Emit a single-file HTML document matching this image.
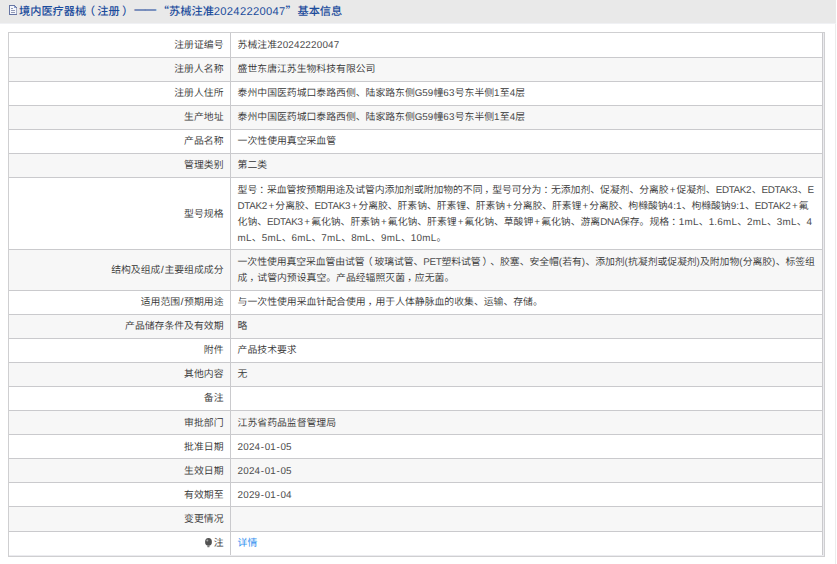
<!DOCTYPE html>
<html lang="zh-CN">
<head>
<meta charset="utf-8">
<title>境内医疗器械（注册）基本信息</title>
<style>
html,body{margin:0;padding:0;background:#fff;overflow:hidden;}
#page{position:absolute;left:0;top:0;width:837px;height:564px;background:#fff;overflow:hidden;font-family:"Liberation Sans","Noto Sans CJK SC",sans-serif;font-size:9.85px;color:#333;font-weight:350;text-spacing-trim:space-all;text-rendering:geometricPrecision;}
.hd{position:absolute;left:0;top:0;width:836px;height:23px;background:#e9e9e9;}
.hd2{position:absolute;left:0;top:23px;width:836px;height:1px;background:#f0f1f4;}
.vline{position:absolute;left:835px;top:24px;width:1px;height:540px;background:#ececec;}
.ico{position:absolute;left:9px;top:5px;width:8px;height:10px;}
.tt{position:absolute;left:19px;top:1.5px;height:20px;line-height:20px;font-size:11.2px;font-weight:500;color:#1b4c9c;white-space:nowrap;}
.tb{position:absolute;left:8px;top:32px;width:815px;height:523px;border:1px solid #cfcfd1;background:#ebebef;}
.r{position:absolute;left:0;width:813px;border-right:1px solid #cacacd;border-bottom:1px solid #cacacd;background:#fff;}
.r.alt{background:#f7f7f7;}
.r.last{border-bottom:none;}
.l{position:absolute;left:0;top:0;bottom:0;width:222px;border-right:1px solid #cacacd;}
.l{display:flex;align-items:center;justify-content:flex-end;white-space:nowrap;line-height:16px;box-sizing:border-box;padding-right:6.5px;}
.v{position:absolute;left:228.6px;height:16px;line-height:16px;white-space:nowrap;}
a{color:#3390f0;font-weight:400;}
.bulb{width:7px;height:10px;margin-right:1.6px;vertical-align:-1.6px;}
.li{display:block;line-height:16px;height:16px;}
.pc{position:relative;left:.22em;}
.po{font-feature-settings:"halt";padding-left:.3em;padding-right:.2em;}
.pe{font-feature-settings:"halt";padding-left:.2em;padding-right:.3em;}
.q{font-family:"Noto Sans CJK SC",sans-serif;line-height:0;}
.d{letter-spacing:.2px;}
.h{padding:0 .45px;}
.c{letter-spacing:-.33px;}
.m{letter-spacing:.29px;}
.p{padding:0 1.1px;}
.c,.d,.m,.p{color:#4c4c4c;}
.sl{padding:0 .65px;}
.tt .d{letter-spacing:.29px;color:inherit;}
.ds{font-weight:700;margin-left:3.4px;margin-right:1.2px;letter-spacing:-.4px;position:relative;top:-1.3px;}
.ql{margin-left:.8px;}
.qr{margin-right:.8px;}

</style>
</head>
<body>
<div id="page">
<div class="hd"></div><div class="hd2"></div>
<svg class="ico" viewBox="0 0 8 10" width="8" height="10" shape-rendering="crispEdges"><path d="M0.5 0.5H5.5L7.5 2.5V9.5H0.5Z" fill="#f5f7fc" stroke="#6675a3" stroke-width="1"/><path d="M7.5 3V9" stroke="#a3acc8" stroke-width="1"/><path d="M5.5 1V2.5H7" fill="none" stroke="#8fa0cc" stroke-width="1"/><path d="M2 3.5H4M2 5.5H6M2 7.5H6" stroke="#9299b6" stroke-width="1"/></svg>
<div class="tt">境内医疗器械<span class="po">（</span>注册<span class="pe">）</span><span class="ds">——</span><span class="q ql">“</span>苏械注准<span class="d">20242220047</span><span class="q qr">”</span>基本信息</div>
<div class="vline"></div>
<div class="tb">
<div class="r" style="top:0px;height:24px">
<div class="l" style="padding-top:2px"><span class="li">注册证编号</span></div>
<div class="v" style="top:5px">苏械注准<span class="d">20242220047</span></div>
</div>
<div class="r alt" style="top:25px;height:23px">
<div class="l" style="padding-top:1px"><span class="li">注册人名称</span></div>
<div class="v" style="top:4px">盛世东唐江苏生物科技有限公司</div>
</div>
<div class="r" style="top:49px;height:23px">
<div class="l" style="padding-top:1px"><span class="li">注册人住所</span></div>
<div class="v" style="top:4px">泰州中国医药城口泰路西侧、陆家路东侧<span class="c">G</span><span class="d">59</span>幢<span class="d">63</span>号东半侧<span class="d">1</span>至<span class="d">4</span>层</div>
</div>
<div class="r alt" style="top:73px;height:23px">
<div class="l" style="padding-top:1px"><span class="li">生产地址</span></div>
<div class="v" style="top:4px">泰州中国医药城口泰路西侧、陆家路东侧<span class="c">G</span><span class="d">59</span>幢<span class="d">63</span>号东半侧<span class="d">1</span>至<span class="d">4</span>层</div>
</div>
<div class="r" style="top:97px;height:23px">
<div class="l" style="padding-top:1px"><span class="li">产品名称</span></div>
<div class="v" style="top:4px">一次性使用真空采血管</div>
</div>
<div class="r alt" style="top:121px;height:23px">
<div class="l" style="padding-top:1px"><span class="li">管理类别</span></div>
<div class="v" style="top:4px">第二类</div>
</div>
<div class="r" style="top:145px;height:71px">
<div class="l" style="padding-top:3px"><span class="li">型号规格</span></div>
<div class="v" style="top:5px;letter-spacing:-0.05px">型号<span class="pc">：</span>采血管按预期用途及试管内添加剂或附加物的不同<span class="pc">，</span>型号可分为<span class="pc">：</span>无添加剂、促凝剂、分离胶<span class="p">+</span>促凝剂、<span class="c">EDTAK</span><span class="d">2</span>、<span class="c">EDTAK</span><span class="d">3</span>、<span class="c">E</span></div>
<div class="v" style="top:21px;letter-spacing:-0.07px"><span class="c">DTAK</span><span class="d">2</span><span class="p">+</span>分离胶、<span class="c">EDTAK</span><span class="d">3</span><span class="p">+</span>分离胶、肝素钠、肝素锂、肝素钠<span class="p">+</span>分离胶、肝素锂<span class="p">+</span>分离胶、枸橼酸钠<span class="d">4:1</span>、枸橼酸钠<span class="d">9:1</span>、<span class="c">EDTAK</span><span class="d">2</span><span class="p">+</span>氟</div>
<div class="v" style="top:37px;letter-spacing:-0.022px">化钠、<span class="c">EDTAK</span><span class="d">3</span><span class="p">+</span>氟化钠、肝素钠<span class="p">+</span>氟化钠、肝素锂<span class="p">+</span>氟化钠、草酸钾<span class="p">+</span>氟化钠、游离<span class="c">DNA</span>保存。规格<span class="pc">：</span><span class="d">1</span><span class="m">mL</span>、<span class="d">1.6</span><span class="m">mL</span>、<span class="d">2</span><span class="m">mL</span>、<span class="d">3</span><span class="m">mL</span>、<span class="d">4</span></div>
<div class="v" style="top:53px"><span class="m">mL</span>、<span class="d">5</span><span class="m">mL</span>、<span class="d">6</span><span class="m">mL</span>、<span class="d">7</span><span class="m">mL</span>、<span class="d">8</span><span class="m">mL</span>、<span class="d">9</span><span class="m">mL</span>、<span class="d">10</span><span class="m">mL</span>。</div>
</div>
<div class="r alt" style="top:217px;height:40px">
<div class="l" style="padding-top:2px"><span class="li">结构及组成<span class="sl">/</span>主要组成成分</span></div>
<div class="v" style="top:5px;letter-spacing:-0.072px">一次性使用真空采血管由试管<span class="po">（</span>玻璃试管、<span class="c">PET</span>塑料试管<span class="pe">）</span>、胶塞、安全帽<span class="m">(</span>若有<span class="m">)</span>、添加剂<span class="m">(</span>抗凝剂或促凝剂<span class="m">)</span>及附加物<span class="m">(</span>分离胶<span class="m">)</span>、标签组</div>
<div class="v" style="top:21px">成<span class="pc">，</span>试管内预设真空。产品经辐照灭菌<span class="pc">，</span>应无菌。</div>
</div>
<div class="r" style="top:258px;height:23px">
<div class="l" style="padding-top:1px"><span class="li">适用范围<span class="sl">/</span>预期用途</span></div>
<div class="v" style="top:4px">与一次性使用采血针配合使用<span class="pc">，</span>用于人体静脉血的收集、运输、存储。</div>
</div>
<div class="r alt" style="top:282px;height:23px">
<div class="l" style="padding-top:1px"><span class="li">产品储存条件及有效期</span></div>
<div class="v" style="top:4px">略</div>
</div>
<div class="r" style="top:306px;height:23px">
<div class="l" style="padding-top:1px"><span class="li">附件</span></div>
<div class="v" style="top:4px">产品技术要求</div>
</div>
<div class="r alt" style="top:330px;height:23px">
<div class="l" style="padding-top:1px"><span class="li">其他内容</span></div>
<div class="v" style="top:4px">无</div>
</div>
<div class="r" style="top:354px;height:23px">
<div class="l" style="padding-top:1px"><span class="li">备注</span></div>
</div>
<div class="r alt" style="top:378px;height:23px">
<div class="l" style="padding-top:3px"><span class="li">审批部门</span></div>
<div class="v" style="top:5px">江苏省药品监督管理局</div>
</div>
<div class="r" style="top:402px;height:23px">
<div class="l" style="padding-top:3px"><span class="li">批准日期</span></div>
<div class="v" style="top:5px"><span class="d">2024<span class="h">-</span>01<span class="h">-</span>05</span></div>
</div>
<div class="r alt" style="top:426px;height:23px">
<div class="l" style="padding-top:3px"><span class="li">生效日期</span></div>
<div class="v" style="top:5px"><span class="d">2024<span class="h">-</span>01<span class="h">-</span>05</span></div>
</div>
<div class="r" style="top:450px;height:23px">
<div class="l" style="padding-top:3px"><span class="li">有效期至</span></div>
<div class="v" style="top:5px"><span class="d">2029<span class="h">-</span>01<span class="h">-</span>04</span></div>
</div>
<div class="r alt" style="top:474px;height:24px">
<div class="l" style="padding-top:2px"><span class="li">变更情况</span></div>
</div>
<div class="r last" style="top:499px;height:23px">
<div class="l" style="padding-top:1px"><span class="li"><svg class="bulb" viewBox="0 0 7 10" width="7" height="10"><ellipse cx="3.5" cy="3.9" rx="3.4" ry="3.8" fill="#525252"/><rect x="2.3" y="7.5" width="2.2" height="1.8" rx="0.5" fill="#7a7a7a"/><circle cx="2.3" cy="2.5" r="1" fill="#a8a8a8"/></svg>注</span></div>
<div class="v" style="top:4px"><a>详情</a></div>
</div>
</div>
</div>
</body>
</html>
